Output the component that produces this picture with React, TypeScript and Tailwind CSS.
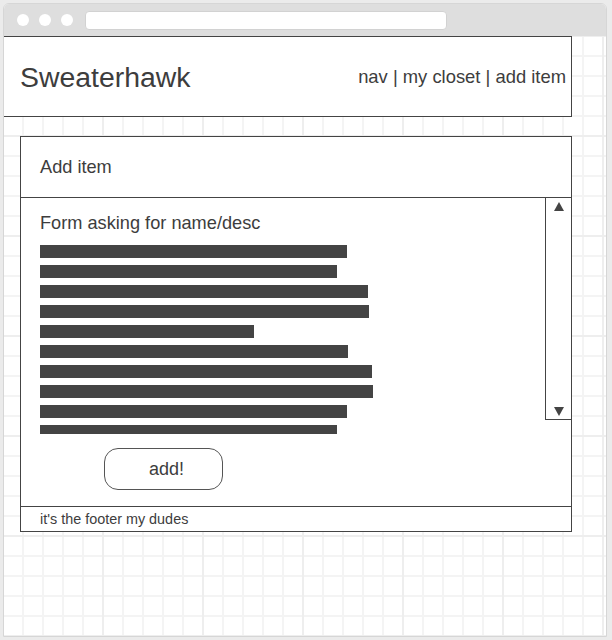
export default function App() {
  const bars = [307, 297, 328, 329, 214, 308, 332, 333, 307, 297]

  return (
    <div className="min-h-[640px] w-[612px] bg-[#ebebeb] p-[3px] font-['Liberation_Sans',Arial,sans-serif] text-[#3d3d3d]">
      {/* browser window */}
      <div className="flex h-[634px] w-[604px] flex-col overflow-hidden rounded-t-[6px] border border-[#d6d6d6] bg-white">
        {/* title bar */}
        <div className="flex h-[32px] items-center bg-[#dedede] pl-[13px]">
          <div className="flex gap-[10px]">
            <span className="h-[12px] w-[12px] rounded-full bg-white"></span>
            <span className="h-[12px] w-[12px] rounded-full bg-white"></span>
            <span className="h-[12px] w-[12px] rounded-full bg-white"></span>
          </div>
          <div className="ml-[12px] h-[19px] w-[362px] rounded-[4px] border border-[#d2d2d2] bg-white"></div>
        </div>

        {/* canvas */}
        <div className="flex-1 bg-[linear-gradient(to_right,#eeeeee_2px,transparent_2px),linear-gradient(to_bottom,#eeeeee_2px,transparent_2px),linear-gradient(to_right,#f4f4f4_2px,transparent_2px),linear-gradient(to_bottom,#f4f4f4_2px,transparent_2px)] bg-[size:100px_100px,100px_100px,20px_20px,20px_20px] bg-[position:-2px_-1px]">
          {/* header */}
          <div className="-ml-px flex h-[81px] w-[569px] items-center justify-between border border-[#444] bg-white pl-[16px] pr-[5px]">
            <span className="text-[28.4px] leading-[32px]">Sweaterhawk</span>
            <span className="text-[18.4px] leading-[20px]">nav | my closet | add item</span>
          </div>

          {/* panel */}
          <div className="ml-[16px] mt-[19px] w-[552px] border border-[#444] bg-white">
            <div className="flex h-[61px] items-center border-b border-[#444] pl-[19px]">
              <span className="text-[18.2px] leading-[20px]">Add item</span>
            </div>

            <div className="flex h-[309px] border-b border-[#444]">
              <div className="flex-1">
                <div className="h-[236px] overflow-hidden pl-[19px] pt-[15px]">
                  <p className="text-[18.2px] leading-[20px]">Form asking for name/desc</p>
                  <div className="mt-[12px] flex flex-col gap-[7px]">
                    {bars.map((w, i) => (
                      <div key={i} className="h-[13px] bg-[#444]" style={{ width: w }}></div>
                    ))}
                  </div>
                </div>
                <button className="ml-[83px] mt-[14px] flex h-[42px] w-[119px] items-center justify-center rounded-[14px] border border-[#555] pl-[6px] text-[18px] leading-[20px]">
                  add!
                </button>
              </div>

              {/* scrollbar */}
              <div className="flex h-[222px] w-[26px] flex-col items-center justify-between border-b border-l border-[#444] pb-[3px] pt-[4px]">
                <svg width="10" height="9" viewBox="0 0 10 9">
                  <path d="M5 0 L10 9 L0 9 Z" fill="#444" />
                </svg>
                <svg width="10" height="9" viewBox="0 0 10 9">
                  <path d="M0 0 L10 0 L5 9 Z" fill="#444" />
                </svg>
              </div>
            </div>

            <div className="flex h-[24px] items-center pl-[19px]">
              <span className="text-[14.4px] leading-[16px]">it's the footer my dudes</span>
            </div>
          </div>
        </div>
      </div>
    </div>
  )
}
